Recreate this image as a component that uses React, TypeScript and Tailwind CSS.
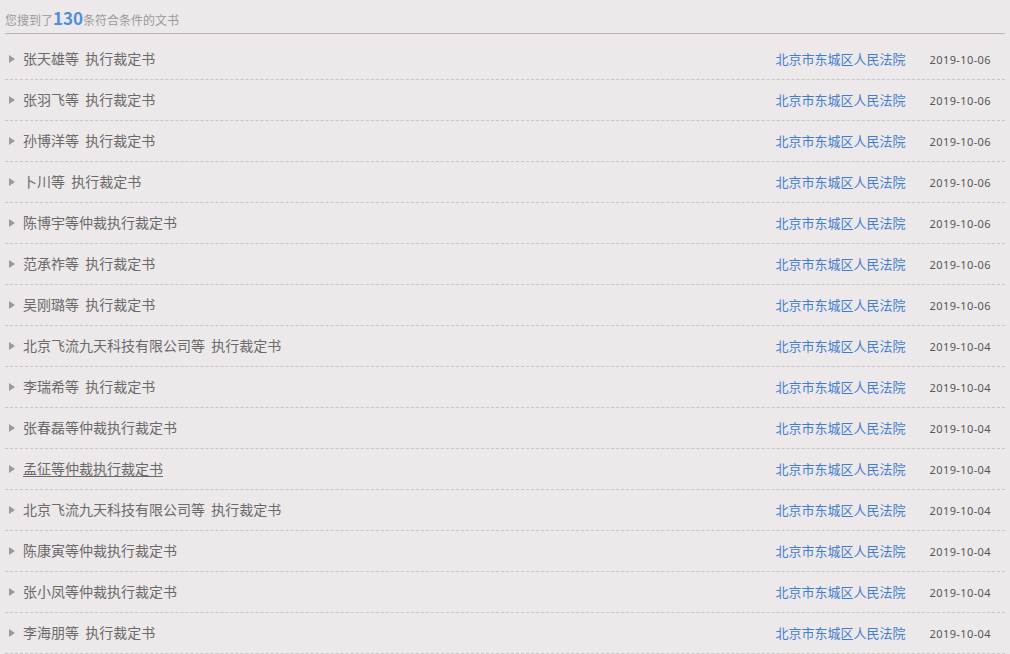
import React from "react";

const rows: [string, string, boolean?][] = [
  ["张天雄等  执行裁定书", "2019-10-06"],
  ["张羽飞等  执行裁定书", "2019-10-06"],
  ["孙博洋等  执行裁定书", "2019-10-06"],
  ["卜川等  执行裁定书", "2019-10-06"],
  ["陈博宇等仲裁执行裁定书", "2019-10-06"],
  ["范承祚等  执行裁定书", "2019-10-06"],
  ["吴刚璐等  执行裁定书", "2019-10-06"],
  ["北京飞流九天科技有限公司等  执行裁定书", "2019-10-04"],
  ["李瑞希等  执行裁定书", "2019-10-04"],
  ["张春磊等仲裁执行裁定书", "2019-10-04"],
  ["孟征等仲裁执行裁定书", "2019-10-04", true],
  ["北京飞流九天科技有限公司等  执行裁定书", "2019-10-04"],
  ["陈康寅等仲裁执行裁定书", "2019-10-04"],
  ["张小凤等仲裁执行裁定书", "2019-10-04"],
  ["李海朋等  执行裁定书", "2019-10-04"],
];

export default function App() {
  return (
    <div
      className="w-[1010px] h-[654px] overflow-hidden bg-[#ede9ea] px-[5px]"
      style={{ fontFamily: '"Microsoft YaHei", "Noto Sans CJK SC", "Noto Sans", sans-serif' }}
    >
      <div className="h-[34px] border-b border-[#bcb6b7] pt-[11px] flex items-end pb-[4px]">
        <div className="flex items-baseline text-[12px] text-[#9a9a9a] leading-[18px]">
          <span>您搜到了</span>
          <span className="text-[17px] font-bold text-[#4b8fe0] leading-[18px]">130</span>
          <span>条符合条件的文书</span>
        </div>
      </div>
      <div className="mt-[5px]">
        {rows.map(([title, date, hover], i) => (
          <div
            key={i}
            className="h-[41px] flex items-center border-b border-dashed border-[#c9c4c5] pb-[1px]"
          >
            <svg width="6" height="8" viewBox="0 0 6 8" className="ml-[4px] mr-[8px] shrink-0">
              <path d="M0 0 L6 4 L0 8 Z" fill="#9a9a9a" />
            </svg>
            <span
              className={`text-[14px] text-[#6a6a6a] whitespace-pre ${hover ? "underline underline-offset-2" : ""}`}
            >
              {title}
            </span>
            <span className="ml-auto text-[13px] text-[#3f7dcf] mr-[1px]">北京市东城区人民法院</span>
            <span
              className="ml-[23px] mr-[14px] mt-[4px] text-[11px] text-[#555] tracking-[0.4px]"
              style={{ fontFamily: '"Noto Sans", sans-serif' }}
            >
              {date}
            </span>
          </div>
        ))}
      </div>
    </div>
  );
}
